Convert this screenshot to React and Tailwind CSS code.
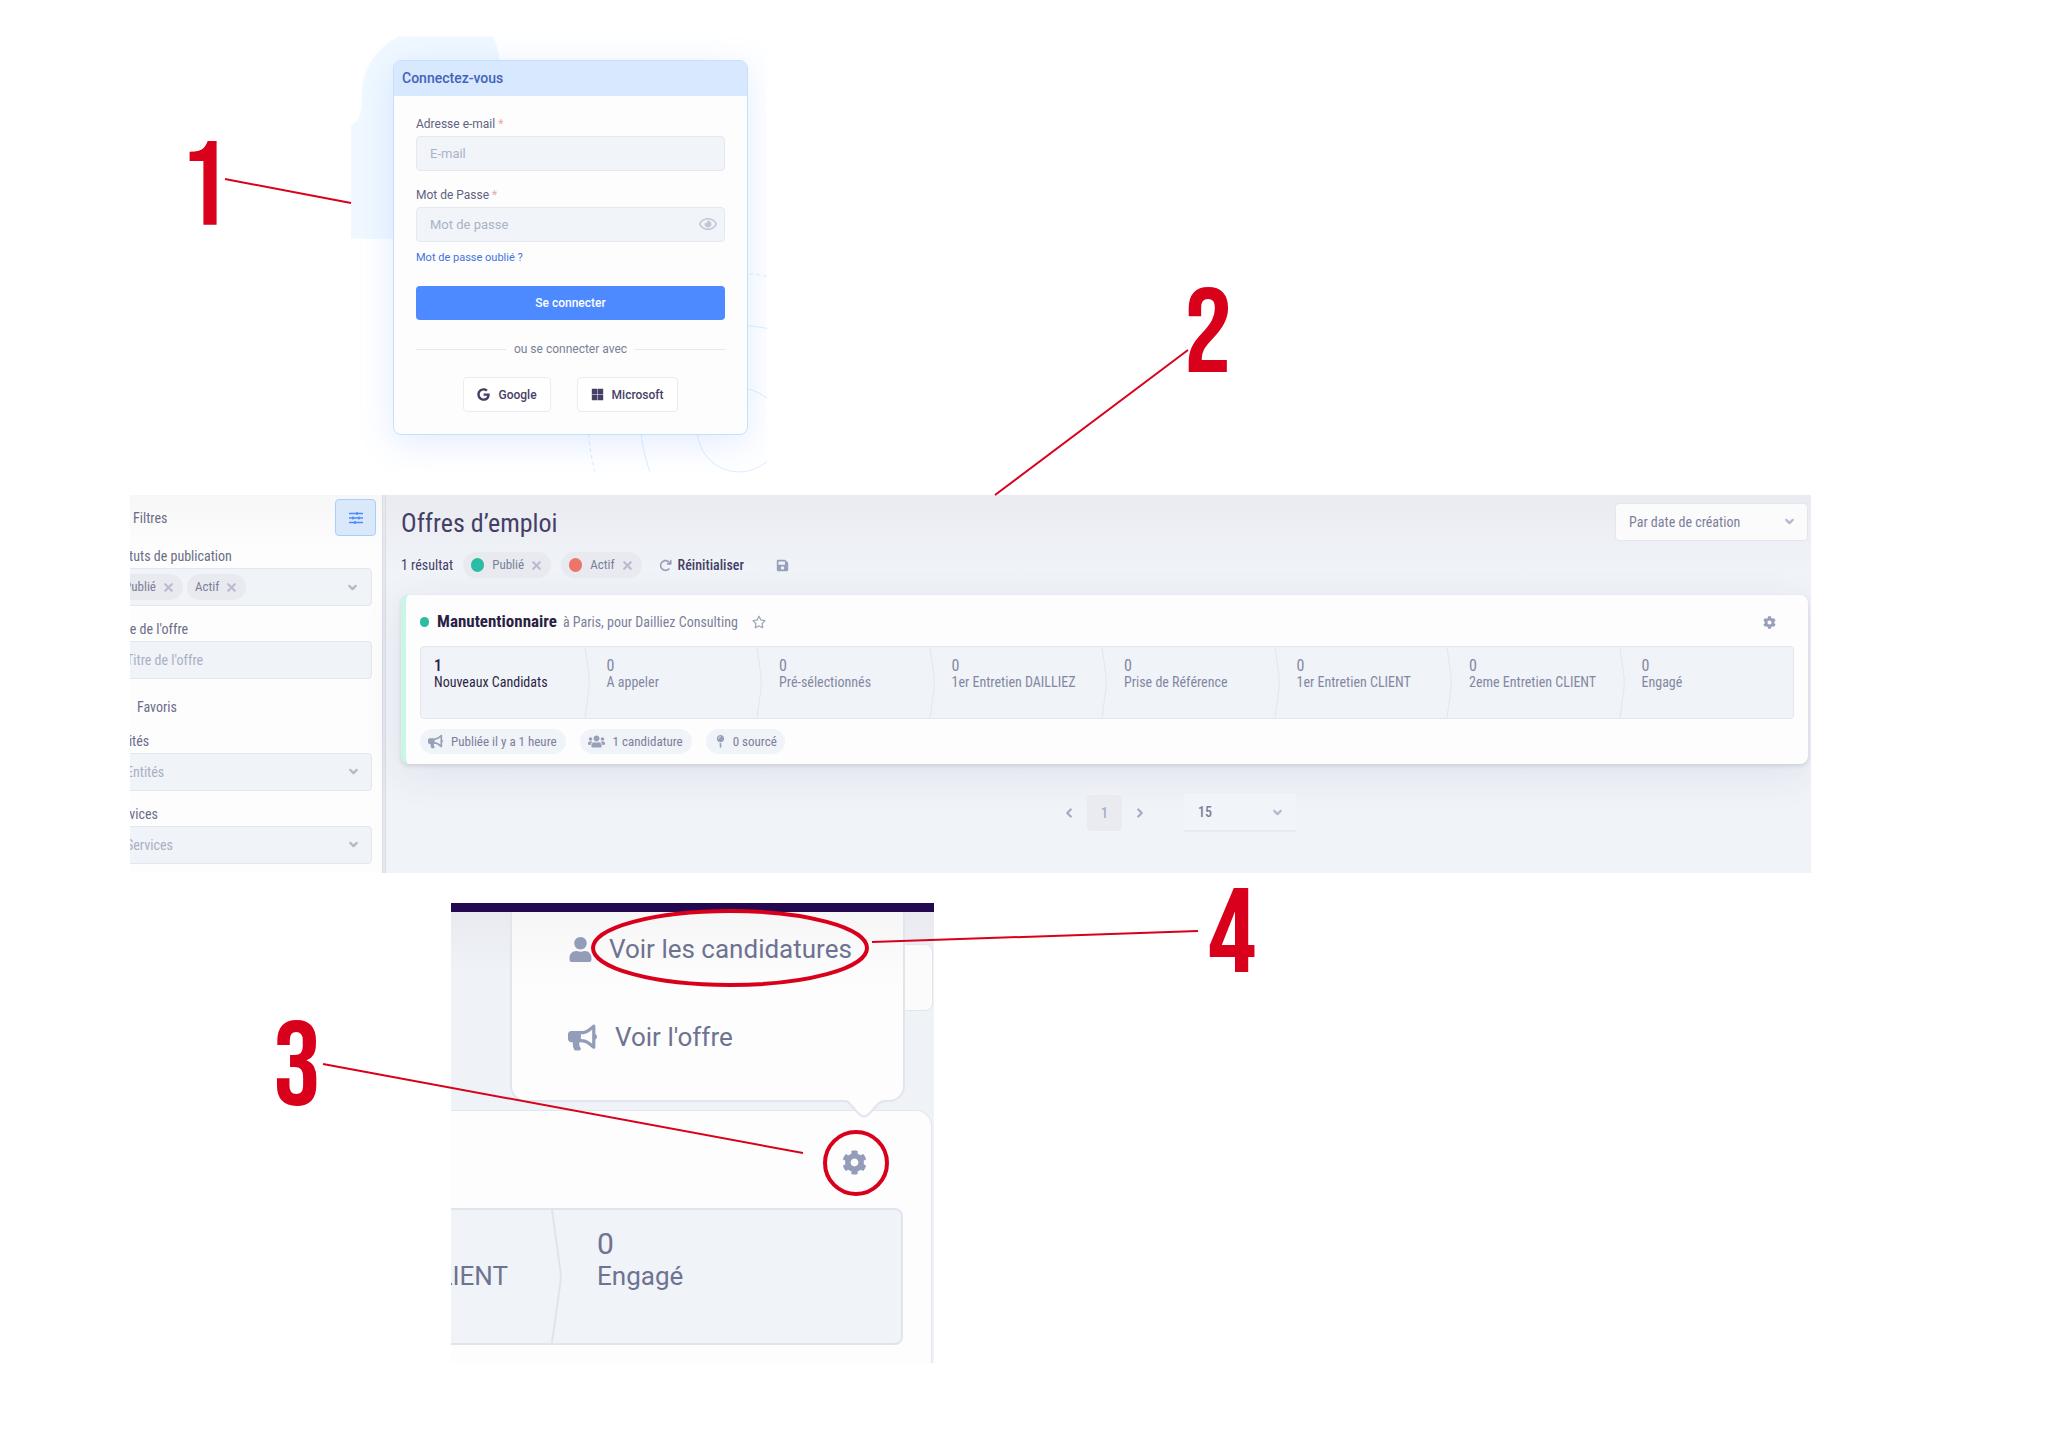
import React from "react";
import {
  FaBullhorn,
  FaCog,
  FaGoogle,
  FaMapPin,
  FaMicrosoft,
  FaRegEye,
  FaRegStar,
  FaSave,
  FaUser,
  FaUsers,
} from "react-icons/fa";
import { FaArrowRotateRight } from "react-icons/fa6";
import { FiChevronDown, FiChevronLeft, FiChevronRight, FiX } from "react-icons/fi";

const steps = [
  ["1", "Nouveaux Candidats"],
  ["0", "A appeler"],
  ["0", "Pré-sélectionnés"],
  ["0", "1er Entretien DAILLIEZ"],
  ["0", "Prise de Référence"],
  ["0", "1er Entretien CLIENT"],
  ["0", "2eme Entretien CLIENT"],
  ["0", "Engagé"],
];

function LoginDecor() {
  return (
    <svg className="absolute inset-0 h-full w-full" viewBox="0 0 416 436" fill="none" aria-hidden="true">
      <path
        d="M48 0H142C146 8 148 16 149 26V202H60C40 202 20 203 0 202V89C8 84 11 78 11 64C10 34 24 12 48 0Z"
        fill="#f0f8ff"
      />
      <g stroke="#dceeff" strokeWidth="1">
        <path d="M416 425A42 42 0 1 1 416 362" />
        <path d="M416 292C350 278 284 310 289 380C289 400 293 418 299 436" />
        <path d="M416 240C330 222 230 280 237 384C237 404 240 420 244 436" strokeDasharray="4 3" />
      </g>
    </svg>
  );
}

function Required() {
  return <span className="text-[#f2a3a3]">*</span>;
}

function LoginPanel() {
  return (
    <section className="relative ml-[351px] w-[416px] overflow-hidden px-[42px] pt-6 pb-[38px]">
      <LoginDecor />
      <form
        className="relative -mr-[23px] w-[355px] overflow-hidden rounded-lg border border-[#c4e0fb] bg-[#fdfdfd] shadow-[0_8px_36px_rgba(76,139,255,0.16)]"
        onSubmit={(e) => e.preventDefault()}
      >
        <h2 className="flex h-[35px] items-center bg-[#d8e8ff] px-2 text-[14px] font-medium text-[#4263b8]">
          Connectez-vous
        </h2>
        <div className="flex flex-col px-[22px] pt-5 pb-[22px] text-[13px] leading-4">
          <label htmlFor="email" className="text-[12px] text-[#62627f]">
            Adresse e-mail <Required />
          </label>
          <input
            id="email"
            type="email"
            placeholder="E-mail"
            className="mt-1 h-[35px] rounded border border-[#e6e8ef] bg-[#f1f4f9] px-[13px] placeholder:text-[#aab3c5]"
          />
          <label htmlFor="password" className="mt-4 text-[12px] text-[#62627f]">
            Mot de Passe <Required />
          </label>
          <div className="relative mt-1 flex">
            <input
              id="password"
              type="password"
              placeholder="Mot de passe"
              className="h-[35px] min-w-0 flex-1 rounded border border-[#e6e8ef] bg-[#f1f4f9] px-[13px] placeholder:text-[#aab3c5]"
            />
            <button type="button" aria-label="Afficher le mot de passe" className="absolute top-2 right-2 text-[#c0c7d6]">
              <FaRegEye size={18} />
            </button>
          </div>
          <a href="#oubli" className="mt-2 text-[11px] text-[#3f73e0]">
            Mot de passe oublié ?
          </a>
          <button type="submit" className="mt-5 h-[34px] rounded bg-[#4d89ff] text-[12px] font-medium text-white">
            Se connecter
          </button>
          <div className="mt-[21px] flex items-center gap-2 text-[12px] text-[#7a7f98]">
            <span className="h-px flex-1 bg-[#e6e8f0]" />
            ou se connecter avec
            <span className="h-px flex-1 bg-[#e6e8f0]" />
          </div>
          <div className="mt-5 flex justify-center gap-[26px] text-[12px] font-medium text-[#453f66]">
            <button type="button" className="flex h-[35px] items-center gap-2 rounded border border-[#ebebf3] bg-white px-[13px]">
              <FaGoogle size={13} />
              Google
            </button>
            <button type="button" className="flex h-[35px] items-center gap-2 rounded border border-[#ebebf3] bg-white px-[13px]">
              <FaMicrosoft size={13} />
              Microsoft
            </button>
          </div>
        </div>
      </form>
    </section>
  );
}

function Chip({ label, dot }) {
  return (
    <span className="flex h-[26px] items-center rounded-full bg-[#e8eaef] px-2 text-[#7b809a]">
      {dot === "green" && <span className="mr-2 h-3.5 w-[13px] rounded-full bg-[#2cbca4]" />}
      {dot === "red" && <span className="mr-2 h-3.5 w-[13px] rounded-full bg-[#ec7468]" />}
      {label}
      <button type="button" aria-label={"Retirer " + label} className="ml-1.5 text-[#b6bccc]">
        <FiX size={13} strokeWidth={4} />
      </button>
    </span>
  );
}

function SideSelect({ id, label }) {
  return (
    <div className="relative mt-1 flex">
      <select
        id={id}
        className="h-[38px] flex-1 appearance-none rounded border border-[#e3e6ee] bg-[#f0f3f8] px-3.5 text-[#a9b0c4]"
      >
        <option>{label}</option>
      </select>
      <FiChevronDown className="pointer-events-none absolute top-3 right-3 text-[#b3bacb]" size={13} strokeWidth={4} />
    </div>
  );
}

function Filters() {
  return (
    <aside className="w-[252px] shrink-0 overflow-hidden bg-linear-to-b from-[#f7f7f8] to-[#fdfdfd] to-15%">
      <div className="-ml-[19px] flex flex-col pr-[10px] pb-[9px] text-[14px] leading-4 text-[#6b6d88]">
        <div className="-mr-1 flex items-center justify-between pt-1 pl-[22px]">
          <span>Filtres</span>
          <button
            type="button"
            aria-label="Filtres"
            className="flex h-[37px] w-[41px] items-center justify-center rounded border border-[#a8cffc] bg-[#dae9fa] text-[#4d89ff]"
          >
            <svg width="14" height="12" viewBox="0 0 14 12" stroke="currentColor" strokeWidth="1.5" aria-hidden="true">
              <path d="M0 1.5H14M0 6H14M0 10.5H14M8 0V3M4 4.5V7.5M10 4.5V7.5M6 9V12" />
            </svg>
          </button>
        </div>
        <span className="mt-3">Statuts de publication</span>
        <div className="mt-1 flex h-[38px] items-center gap-1 rounded border border-[#e3e6ee] bg-[#f0f3f8] pr-3 pl-1 text-[13px]">
          <Chip label="Publié" />
          <Chip label="Actif" />
          <button type="button" aria-label="Choisir les statuts" className="ml-auto text-[#b3bacb]">
            <FiChevronDown size={13} strokeWidth={4} />
          </button>
        </div>
        <label htmlFor="titre" className="mt-[15px]">
          Titre de l'offre
        </label>
        <input
          id="titre"
          type="text"
          placeholder="Titre de l'offre"
          className="mt-1 h-[38px] rounded border border-[#e3e6ee] bg-[#f0f3f8] px-3.5 placeholder:text-[#a9b0c4]"
        />
        <label className="mt-5 flex items-center gap-3.5">
          <input type="checkbox" className="h-3 w-3" />
          Favoris
        </label>
        <label htmlFor="entites" className="mt-[18px]">
          Entités
        </label>
        <SideSelect id="entites" label="Entités" />
        <label htmlFor="services" className="mt-[15px]">
          Services
        </label>
        <SideSelect id="services" label="Services" />
      </div>
    </aside>
  );
}

function StepDivider() {
  return (
    <svg className="absolute top-0 right-1 h-full w-[6px]" viewBox="0 0 6 72" preserveAspectRatio="none" fill="none" aria-hidden="true">
      <path d="M1 0L5 30Q5.5 36 5 42L1 72" stroke="#e3e6ee" strokeWidth="1" />
    </svg>
  );
}

function JobCard() {
  return (
    <article className="rounded-lg border-l-[5px] border-[#c9f6e6] bg-[#fdfdfd] px-3.5 pt-[15px] pb-2.5 shadow-[0_2px_4px_rgba(60,60,90,0.14),0_10px_40px_rgba(60,60,90,0.09)]">
      <header className="flex h-6 items-center text-[#7b809a]">
        <span className="h-2.5 w-[9px] rounded-full bg-[#2cbca4]" />
        <h2 className="ml-2 text-[17px] font-bold text-[#2c1f45]">Manutentionnaire</h2>
        <p className="ml-1.5 text-[14px]">à Paris, pour Dailliez Consulting</p>
        <button type="button" aria-label="Ajouter aux favoris" className="ml-3.5 text-[#9aa2ba]">
          <FaRegStar size={14} />
        </button>
        <button type="button" aria-label="Options" className="mr-[18px] ml-auto text-[#97a0b8]">
          <FaCog size={13} />
        </button>
      </header>
      <div className="mt-3 overflow-hidden rounded border border-[#e3e6ee] bg-[#f0f3f8]">
        <ol className="-mr-2 grid h-[71px] grid-cols-8">
          {steps.map(([count, name], i) => (
            <li
              key={name}
              className={
                i === 0
                  ? "relative pt-[11px] pl-[13px] leading-4 text-[#2c1f45]"
                  : "relative pt-[11px] pl-[13px] leading-4 text-[#8388a2]"
              }
            >
              <div className={i === 0 ? "text-[16px] font-medium" : "text-[16px]"}>{count}</div>
              <div className="text-[14px] whitespace-nowrap">{name}</div>
              {i < 7 && <StepDivider />}
            </li>
          ))}
        </ol>
      </div>
      <footer className="mt-2.5 flex gap-3.5 text-[13px] text-[#7b809a]">
        <span className="flex h-[25px] items-center gap-2 rounded-full bg-[#f0f3f8] pr-[9px] pl-2">
          <FaBullhorn size={15} className="text-[#97a0b8]" />
          Publiée il y a 1 heure
        </span>
        <span className="flex h-[25px] items-center gap-2 rounded-full bg-[#f0f3f8] pr-[9px] pl-2">
          <FaUsers size={17} className="text-[#97a0b8]" />1 candidature
        </span>
        <span className="flex h-[25px] items-center gap-1.5 rounded-full bg-[#f0f3f8] px-2">
          <FaMapPin size={13} className="text-[#97a0b8]" />0 sourcé
        </span>
      </footer>
    </article>
  );
}

function OffersPanel() {
  return (
    <section className="mt-[22px] mr-[237px] ml-[130px] flex overflow-hidden font-['Roboto_Condensed',Roboto,sans-serif]">
      <Filters />
      <div className="w-1 shrink-0 border-x border-[#d9dbe5] bg-[#e6e8ee]" />
      <main className="min-w-0 flex-1 bg-linear-to-b from-[#e9ebf0] to-[#f0f3f8] to-20% pr-[3px] pl-[15px]">
        <div className="flex items-start justify-between pt-2">
          <h1 className="pt-1 text-[26px] leading-8 text-[#453f66]">Offres d’emploi</h1>
          <div className="relative">
            <select
              aria-label="Trier"
              className="h-[38px] w-[193px] appearance-none rounded border border-[#e3e6ee] bg-[#fbfbfb] px-[13px] text-[14px] text-[#7b809a]"
            >
              <option>Par date de création</option>
            </select>
            <FiChevronDown className="pointer-events-none absolute top-3 right-3 text-[#b3bacb]" size={13} strokeWidth={4} />
          </div>
        </div>
        <div className="mt-[11px] flex h-[26px] items-center text-[13px]">
          <span className="mr-2.5 text-[14px] text-[#453f66]">1 résultat</span>
          <Chip label="Publié" dot="green" />
          <span className="w-2.5" />
          <Chip label="Actif" dot="red" />
          <button type="button" className="ml-[17px] flex items-center gap-1.5 text-[14px] font-medium text-[#453f66]">
            <FaArrowRotateRight size={13} className="text-[#97a0b8]" />
            Réinitialiser
          </button>
          <button type="button" aria-label="Enregistrer" className="ml-8 text-[#97a0b8]">
            <FaSave size={13} />
          </button>
        </div>
        <div className="mt-[17px]">
          <JobCard />
        </div>
        <nav aria-label="Pagination" className="mt-[30px] flex items-center justify-center pl-[149px] text-[14px] text-[#7b809a]">
          <button type="button" aria-label="Page précédente" className="text-[#a5adc2]">
            <FiChevronLeft size={14} strokeWidth={4} />
          </button>
          <button type="button" className="mx-[11px] h-9 w-[35px] rounded bg-[#e9ebf0] font-medium text-[#a5adc2]">
            1
          </button>
          <button type="button" aria-label="Page suivante" className="text-[#a5adc2]">
            <FiChevronRight size={14} strokeWidth={4} />
          </button>
          <div className="relative ml-[37px]">
            <select
              aria-label="Résultats par page"
              className="h-[38px] w-28 appearance-none border-b-2 border-[#e8eaf0] bg-[#f1f4f9] px-3.5 font-medium"
            >
              <option>15</option>
            </select>
            <FiChevronDown className="pointer-events-none absolute top-3 right-3 text-[#b3bacb]" size={13} strokeWidth={4} />
          </div>
        </nav>
      </main>
    </section>
  );
}

function MenuPanel() {
  return (
    <section className="relative mt-[30px] ml-[451px] w-[483px] overflow-hidden text-[#6d7391]">
      <div className="h-[9px] bg-[#230a50]" />
      <div className="flex h-[198px] items-start justify-end bg-linear-to-b from-[#e8eaef] to-[#eff2f7] to-30% pt-8">
        <div className="mr-px h-[67px] w-[90px] rounded-lg border border-[#e2e5ed] bg-[#fbfbfb]" />
      </div>
      <div className="bg-[#eff2f7]">
        <div className="mr-0.5 h-[253px] rounded-tr-2xl border-t border-r border-[#e4e6ee] bg-[#fdfdfd] pt-[38px]">
          <div className="flex h-[26px] justify-end pr-[64px]">
            <button type="button" aria-label="Options" className="text-[#939cb8]">
              <FaCog size={25} />
            </button>
          </div>
          <div className="mt-[33px] mr-7 grid h-[137px] grid-cols-[112px_1fr] rounded-r-lg border-y-2 border-r-2 border-[#e2e4ed] bg-[#f0f3f8]">
            <div className="relative flex justify-end pt-[50px] pr-[55px] text-[26px] leading-8 whitespace-nowrap">
              1er Entretien CLIENT
              <svg className="absolute top-0 right-0 h-full w-3" viewBox="0 0 12 134" fill="none" aria-hidden="true">
                <path d="M1 0L9 58Q10.500 67 9 76L1 134" stroke="#e2e4ed" strokeWidth="2" />
              </svg>
            </div>
            <div className="pt-[18px] pl-[34px]">
              <div className="text-[30px] leading-8">0</div>
              <div className="text-[26px] leading-8">Engagé</div>
            </div>
          </div>
        </div>
      </div>
      <div className="absolute top-[9px] left-[59px] w-[395px]" role="menu">
        <div className="flex h-[190px] flex-col gap-14 rounded-b-2xl border-x-2 border-b-2 border-[#e3e5ed] bg-linear-to-b from-[#f6f6f7] to-[#fdfdfd] to-40% pt-[21px] pl-[56px] text-[26px] leading-8">
          <button type="button" role="menuitem" className="flex items-center gap-4">
            <FaUser size={25} className="text-[#939cb8]" />
            Voir les candidatures
          </button>
          <button type="button" role="menuitem" className="flex items-center gap-[18px]">
            <FaBullhorn size={29} className="text-[#939cb8]" />
            Voir l'offre
          </button>
        </div>
        <svg className="-mt-0.5 ml-[334px]" width="42" height="19" viewBox="0 0 42 19" fill="none" aria-hidden="true">
          <path d="M0 0H42C38 0 36 2 34 4L25 14Q20 19 15 14L6 4C4 1 2 0 0 0Z" fill="#fdfdfd" />
          <path d="M1 1Q4 1 6 4L15 14Q20 19 25 14L34 4Q37 1 41 1" stroke="#e3e5ed" strokeWidth="2" />
        </svg>
      </div>
    </section>
  );
}

function Annotations() {
  return (
    <div className="pointer-events-none absolute inset-0 overflow-hidden font-['Bebas_Neue','Roboto_Condensed',sans-serif] text-[120px] leading-[120px] text-[#d9001b]">
      <svg className="absolute top-0 left-0" width="2048" height="1448" fill="none" stroke="#d9001b" aria-hidden="true">
        <g strokeWidth="2">
          <path d="M225 179L351 203" />
          <path d="M1188 350L995 495" />
          <path d="M323 1064L803 1153" />
          <path d="M872 942L1198 931" />
        </g>
        <ellipse cx="730" cy="948" rx="137" ry="37" strokeWidth="4" />
        <circle cx="856" cy="1163" r="31" strokeWidth="4" />
      </svg>
      <span className="absolute top-[129px] left-[180px]">1</span>
      <span className="absolute top-[276px] left-[1184px]">2</span>
      <span className="absolute top-[1009px] left-[273px]">3</span>
      <span className="absolute top-[876px] left-[1208px]">4</span>
    </div>
  );
}

export default function App() {
  return (
    <div className="relative min-h-screen bg-white pt-9 pb-[86px] font-[Roboto,sans-serif]">
      <LoginPanel />
      <OffersPanel />
      <MenuPanel />
      <Annotations />
    </div>
  );
}
